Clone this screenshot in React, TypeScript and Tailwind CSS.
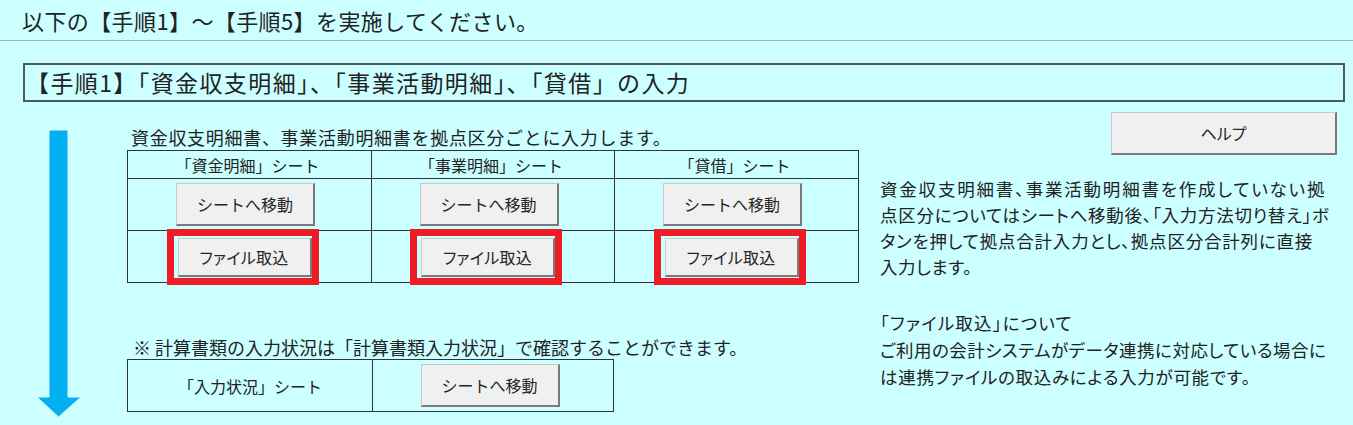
import React from "react";

const font = "font-['Noto_Sans_CJK_JP','Noto_Sans_CJK_SC',sans-serif]";

function XlButton({
  label,
  className = "",
  textClass = "",
}: {
  label: string;
  className?: string;
  textClass?: string;
}) {
  return (
    <div
      className={`flex items-center justify-center bg-[#f0f0f0] border-t border-l border-[#c9c9c9] border-r-2 border-b-2 border-r-[#7a7a7a] border-b-[#7a7a7a] text-[16px] text-[#262626] ${textClass} ${className}`}
    >
      {label}
    </div>
  );
}

function Arrow() {
  return (
    <svg width="46" height="290" viewBox="0 0 46 290" className="block">
      <path
        d="M13 1 H32 V268 H45 L22.5 288 L1 268 H13 Z"
        fill="#00b0f0"
        stroke="#dff6ff"
        strokeWidth="1"
      />
    </svg>
  );
}

export default function App() {
  const cols = ["「資金明細」シート", "「事業明細」シート", "「貸借」シート"];
  return (
    <div
      className={`w-[1353px] h-[425px] overflow-hidden bg-[#ccffff] text-[#222] ${font}`}
    >
      {/* Title */}
      <div className="h-[41px] border-b border-[#a8b4b4] flex items-center pl-[22px] text-[22px] tracking-[0.4px] whitespace-nowrap">
        以下の【手順1】～【手順5】を実施してください。
      </div>

      {/* Step box */}
      <div className="mt-[22px] ml-[23px] w-[1322px] h-[39px] border-2 border-[#4e5a5a] flex items-center pl-[1px] text-[23px] tracking-[1.4px] whitespace-nowrap">
        【手順1】「資金収支明細」、「事業活動明細」、「貸借」の入力
      </div>

      {/* Body */}
      <div className="flex items-start">
        {/* Arrow */}
        <div className="ml-[36px] mt-[27px] w-[46px] shrink-0">
          <Arrow />
        </div>

        {/* Middle column */}
        <div className="ml-[45px] mt-[22px] w-[732px] shrink-0">
          <div className="h-[26px] flex items-center pl-[4px] text-[18px] tracking-[0.7px] whitespace-nowrap">
            資金収支明細書、事業活動明細書を拠点区分ごとに入力します。
          </div>
          <div className="grid grid-cols-[244px_243px_244px] border-l border-t border-[#333]">
            {cols.map((c) => (
              <div
                key={c}
                className="h-[28px] border-r border-b border-[#333] flex items-center justify-center pr-[4px] text-[16px]"
              >
                {c}
              </div>
            ))}
            {cols.map((c) => (
              <div
                key={c + "b"}
                className="h-[52px] border-r border-b border-[#333] flex items-center justify-center pr-[8px]"
              >
                <XlButton label="シートへ移動" className="w-[139px] h-[43px]" />
              </div>
            ))}
            {cols.map((c) => (
              <div
                key={c + "c"}
                className="h-[52px] border-r border-b border-[#333] flex items-center justify-center pr-[14px]"
              >
                <div className="w-[152px] h-[56px] shrink-0 border-[7px] border-[#ee1c24] pl-[4px] pt-[2px] pb-[1px] flex mt-[1px]">
                  <XlButton
                    label="ファイル取込"
                    className="flex-1"
                    textClass="[font-feature-settings:'palt'] tracking-[0.3px]"
                  />
                </div>
              </div>
            ))}
          </div>

          <div className="mt-[52px] h-[24px] flex items-center pl-[6px] text-[18px] whitespace-nowrap">
            ※ 計算書類の入力状況は「計算書類入力状況」で確認することができます。
          </div>
          <div className="grid grid-cols-[245px_241px] w-[487px] border-l border-t border-[#333]">
            <div className="h-[52px] border-r border-b border-[#333] flex items-center justify-center text-[16px]">
              「入力状況」シート
            </div>
            <div className="h-[52px] border-r border-b border-[#333] flex items-center justify-center pr-[6px]">
              <XlButton label="シートへ移動" className="w-[139px] h-[43px]" />
            </div>
          </div>
        </div>

        {/* Right column */}
        <div className="ml-[21px] mt-[10px] flex-1">
          <XlButton
            label="ヘルプ"
            className="ml-[231px] w-[226px] h-[43px]"
            textClass="[font-feature-settings:'palt']"
          />
          <div className="mt-[21px] text-[17.5px] leading-[26px] whitespace-nowrap [font-feature-settings:'palt']">
            <div className="tracking-[1.8px]">資金収支明細書、事業活動明細書を作成していない拠</div>
            <div className="tracking-[0.7px]">点区分についてはシートへ移動後、「入力方法切り替え」ボ</div>
            <div className="tracking-[0.8px]">タンを押して拠点合計入力とし、拠点区分合計列に直接</div>
            <div className="tracking-[0.6px]">入力します。</div>
          </div>
          <div className="mt-[29px] text-[17.5px] leading-[27px] whitespace-nowrap [font-feature-settings:'palt']">
            <div className="tracking-[1.2px]">「ファイル取込」について</div>
            <div className="tracking-[0.5px]">ご利用の会計システムがデータ連携に対応している場合に</div>
            <div className="tracking-[0.7px]">は連携ファイルの取込みによる入力が可能です。</div>
          </div>
        </div>
      </div>
    </div>
  );
}
